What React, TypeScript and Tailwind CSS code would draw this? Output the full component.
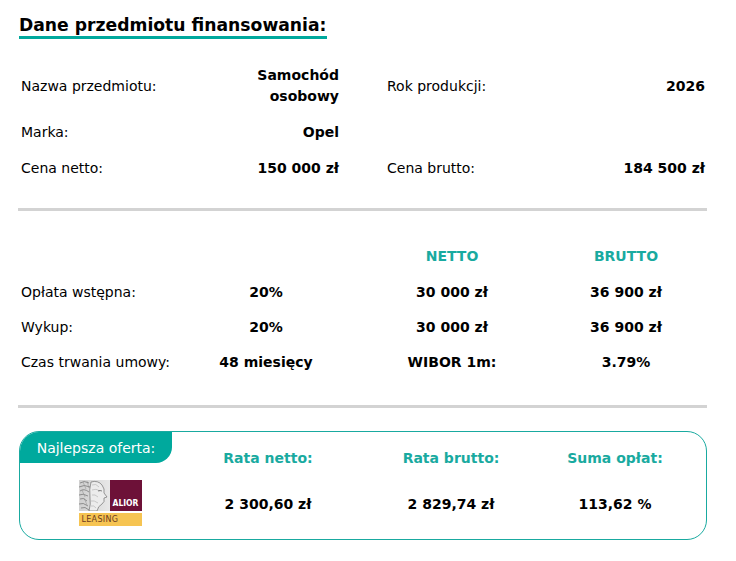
import React from 'react';

// Dane przedmiotu finansowania – podsumowanie oferty leasingowej

const FONT = { fontFamily: '"DejaVu Sans", Verdana, sans-serif' };

function AliorLogo() {
    return (
        <div className="flex flex-col w-[63px]">
            <svg width="63" height="31" viewBox="0 0 63 31">
                <defs>
                    <linearGradient id="bust" x1="0" y1="0" x2="1" y2="0">
                        <stop offset="0" stopColor="#cfcfcf" />
                        <stop offset="1" stopColor="#e8e8e8" />
                    </linearGradient>
                </defs>
                <rect x="0" y="0" width="31" height="31" fill="url(#bust)" />
                {/* engraved hair / laurel */}
                <path d="M1 3 Q5 0 10 3 M0 7 Q5 4 11 7 M1 11 Q5 8 10 12 M0 15 Q4 13 9 16 M1 19 Q4 17 8 21 M0 24 Q4 22 9 26 M2 28 Q6 26 10 30" stroke="#6f6f6f" strokeWidth="0.7" fill="none" />
                <path d="M4 2 L7 9 M8 1 L10 8 M3 10 L6 17 M5 18 L8 25" stroke="#8c8c8c" strokeWidth="0.5" fill="none" />
                {/* face profile */}
                <path d="M12 2 Q19 0 23 5 Q26 9 25 13 L28 17 L25 18 Q26 22 23 24 Q19 26 18 31 L10 31 Q12 24 11 18 Q10 9 12 2 Z" fill="#ececec" stroke="#5f5f5f" strokeWidth="0.6" />
                <path d="M13 5 Q17 3 20 7 M13 10 Q17 8 21 11 M13 15 Q16 14 19 17 M12 21 Q15 20 19 23 M12 26 Q15 25 17 28" stroke="#a2a2a2" strokeWidth="0.5" fill="none" />
                <path d="M19 11 Q21 10 23 11" stroke="#555" strokeWidth="0.7" fill="none" />
                <rect x="31" y="0" width="32" height="31" fill="#6d1138" />
                <text x="46.5" y="26" fill="#ffffff" fontSize="8.5" fontWeight="bold" fontFamily="'DejaVu Sans Condensed', 'DejaVu Sans', sans-serif" textAnchor="middle">ALIOR</text>
            </svg>
            <div className="mt-[2px] h-[13px] bg-[#f6c452] flex items-center pl-[3px] text-[8px] leading-none text-[#6b3a1f] tracking-[0.3px]">
                LEASING
            </div>
        </div>
    );
}

export default function App() {
    return (
        <div className="w-[736px] h-[561px] bg-white text-[14px] text-black overflow-hidden" style={FONT}>
            <div className="pl-[18px] pr-[29px] pt-[14px]">
                {/* Title */}
                <div className="inline-block pl-[1px]">
                    <h1 className="text-[17.2px] font-bold leading-[22px] pr-[1px]">Dane przedmiotu finansowania:</h1>
                    <div className="h-[3px] bg-[#00a99d]" />
                </div>

                {/* Dane pojazdu */}
                <div className="mt-[19px] grid grid-cols-[150px_168px_48px_150px_168px] pl-[3px] leading-[21px]">
                    <div className="py-[7px] flex items-center">Nazwa przedmiotu:</div>
                    <div className="py-[7px] font-bold text-right">Samochód<br />osobowy</div>
                    <div />
                    <div className="py-[7px] flex items-center">Rok produkcji:</div>
                    <div className="py-[7px] font-bold text-right flex items-center justify-end">2026</div>

                    <div className="pt-[8px] pb-[7px]">Marka:</div>
                    <div className="pt-[8px] pb-[7px] font-bold text-right">Opel</div>
                    <div />
                    <div />
                    <div />

                    <div className="pt-[8px] pb-[7px]">Cena netto:</div>
                    <div className="pt-[8px] pb-[7px] font-bold text-right">150 000 zł</div>
                    <div />
                    <div className="pt-[8px] pb-[7px]">Cena brutto:</div>
                    <div className="pt-[8px] pb-[7px] font-bold text-right">184 500 zł</div>
                </div>

                <div className="mt-[22px] h-[3px] bg-[#d3d3d3]" />

                {/* Warunki */}
                <div className="mt-[28px] grid grid-cols-[165px_160px_212px_136px] pl-[3px] leading-[21px]">
                    <div />
                    <div />
                    <div className="py-[7px] text-center font-bold text-[#19aaa0]">NETTO</div>
                    <div className="py-[7px] text-center font-bold text-[#19aaa0]">BRUTTO</div>

                    <div className="pt-[8px] pb-[7px]">Opłata wstępna:</div>
                    <div className="pt-[8px] pb-[7px] text-center font-bold">20%</div>
                    <div className="pt-[8px] pb-[7px] text-center font-bold">30 000 zł</div>
                    <div className="pt-[8px] pb-[7px] text-center font-bold">36 900 zł</div>

                    <div className="py-[7px]">Wykup:</div>
                    <div className="py-[7px] text-center font-bold">20%</div>
                    <div className="py-[7px] text-center font-bold">30 000 zł</div>
                    <div className="py-[7px] text-center font-bold">36 900 zł</div>

                    <div className="py-[7px]">Czas trwania umowy:</div>
                    <div className="py-[7px] text-center font-bold">48 miesięcy</div>
                    <div className="py-[7px] text-center font-bold">WIBOR 1m:</div>
                    <div className="py-[7px] text-center font-bold">3.79%</div>
                </div>

                <div className="mt-[25px] h-[3px] bg-[#d3d3d3]" />

                {/* Najlepsza oferta */}
                <div className="mt-[23px] ml-[1px] border-[1.5px] border-[#19aaa0] rounded-[20px] h-[109px] overflow-hidden">
                    <div className="grid grid-cols-[180px_136px_230px_98px] h-[41px]">
                        <div>
                            <div className="h-[31px] w-[152px] bg-[#00a99d] rounded-br-[16px] flex items-center justify-center text-white leading-none">
                                Najlepsza oferta:
                            </div>
                        </div>
                        <div className="pt-[17px] text-center font-bold text-[#19aaa0] leading-[18px]">Rata netto:</div>
                        <div className="pt-[17px] text-center font-bold text-[#19aaa0] leading-[18px]">Rata brutto:</div>
                        <div className="pt-[17px] text-center font-bold text-[#19aaa0] leading-[18px]">Suma opłat:</div>
                    </div>
                    <div className="grid grid-cols-[180px_136px_230px_98px] items-center pt-[7px]">
                        <div className="flex justify-center">
                            <AliorLogo />
                        </div>
                        <div className="text-center font-bold pt-[2px]">2 300,60 zł</div>
                        <div className="text-center font-bold pt-[2px]">2 829,74 zł</div>
                        <div className="text-center font-bold pt-[2px]">113,62 %</div>
                    </div>
                </div>
            </div>
        </div>
    );
}
